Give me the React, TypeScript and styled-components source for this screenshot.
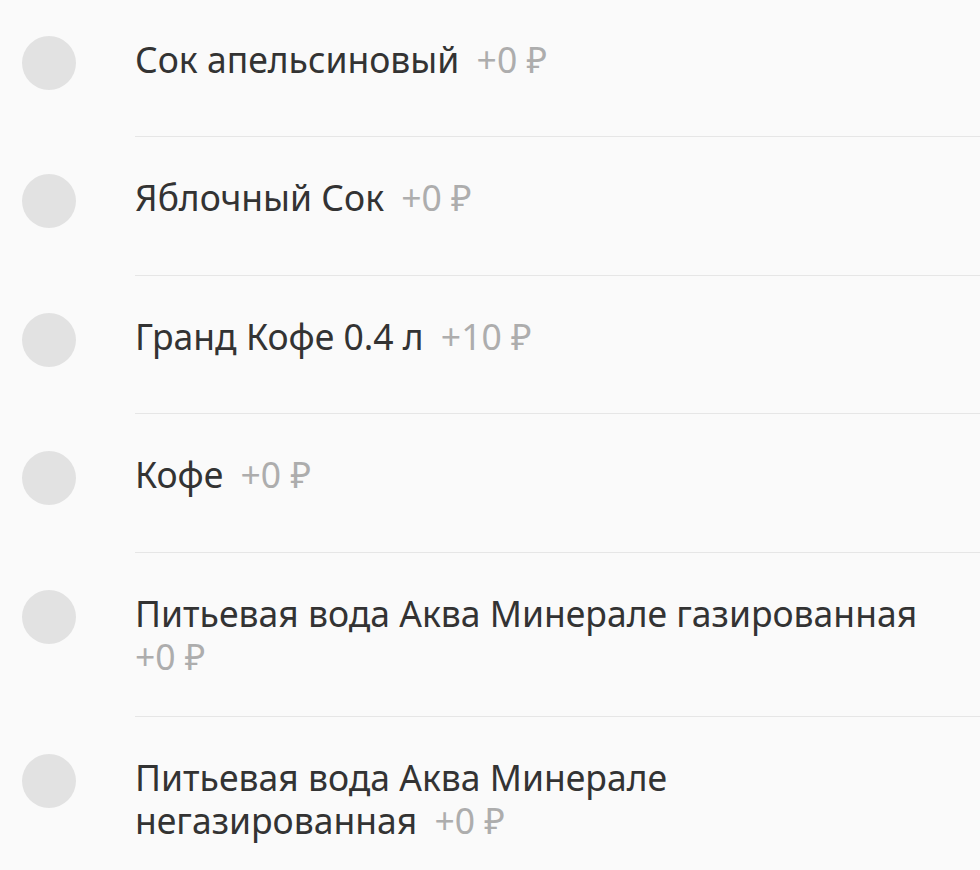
import React from "react";
import styled, { createGlobalStyle } from "styled-components";

const Global = createGlobalStyle`
  html, body { margin: 0; padding: 0; background: #fafafa; }
  body { font-family: "Noto Sans", "DejaVu Sans", sans-serif; -webkit-font-smoothing: antialiased; }
`;

const List = styled.ul`
  list-style: none;
  margin: -1px 0 0;
  padding: 0;
  width: 980px;
`;

const Row = styled.li`
  display: flex;
  align-items: flex-start;
  min-height: 138.4px;
  box-sizing: border-box;
`;

const Radio = styled.span`
  flex: none;
  width: 54px;
  height: 54px;
  border-radius: 50%;
  background: #e2e2e2;
  margin: 37px 59px 0 22px;
`;

const Body = styled.div<{ $last?: boolean }>`
  flex: 1;
  align-self: stretch;
  padding: 39px 45px 38px 0;
  border-bottom: ${(p) => (p.$last ? "none" : "1px solid #e6e6e6")};
`;

const Title = styled.div`
  font-size: 35.5px;
  line-height: 43px;
  color: #333333;
  max-width: 800px;
`;

const Gap = styled.span`
  word-spacing: 8px;
`;

const Price = styled.span`
  color: #adadad;
  white-space: nowrap;
`;

const items = [
  { name: "Сок апельсиновый", price: 0 },
  { name: "Яблочный Сок", price: 0 },
  { name: "Гранд Кофе 0.4 л", price: 10 },
  { name: "Кофе", price: 0 },
  { name: "Питьевая вода Аква Минерале газированная", price: 0 },
  { name: "Питьевая вода Аква Минерале негазированная", price: 0 },
];

export default function App() {
  return (
    <>
      <Global />
      <List>
        {items.map((it, i) => (
          <Row key={it.name}>
            <Radio />
            <Body $last={i === items.length - 1}>
              <Title>
                {it.name}
                <Gap> </Gap>
                <Price>+{it.price}&nbsp;₽</Price>
              </Title>
            </Body>
          </Row>
        ))}
      </List>
    </>
  );
}
